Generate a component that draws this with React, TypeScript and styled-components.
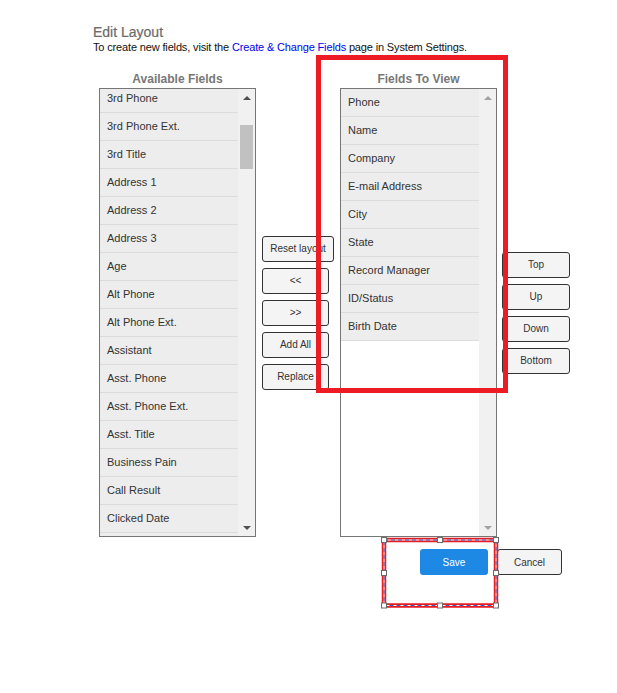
import React from "react";
import styled, { createGlobalStyle } from "styled-components";

const available = [
  "3rd Phone",
  "3rd Phone Ext.",
  "3rd Title",
  "Address 1",
  "Address 2",
  "Address 3",
  "Age",
  "Alt Phone",
  "Alt Phone Ext.",
  "Assistant",
  "Asst. Phone",
  "Asst. Phone Ext.",
  "Asst. Title",
  "Business Pain",
  "Call Result",
  "Clicked Date",
];

const toView = [
  "Phone",
  "Name",
  "Company",
  "E-mail Address",
  "City",
  "State",
  "Record Manager",
  "ID/Status",
  "Birth Date",
];

const moveButtons = ["<<", ">>", "Add All", "Replace"];
const orderButtons = ["Top", "Up", "Down", "Bottom"];

const handles = [
  [6, 8],
  [62, 8],
  [118, 8],
  [6, 41],
  [118, 41],
  [6, 73.5],
  [62, 73.5],
  [118, 73.5],
];

const App = () => {
  return (
    <Page>
      <GlobalStyle />
      <Title>Edit Layout</Title>
      <Hint>
        To create new fields, visit the <Link href="#">Create &amp; Change Fields</Link> page in System
        Settings.
      </Hint>

      <Board>
        <ColumnHead $col={1}>Available Fields</ColumnHead>
        <ColumnHead $col={3}>Fields To View</ColumnHead>

        <ListBox $col={1}>
          <Items $offset={-4}>
            {available.map((name) => (
              <Item key={name}>{name}</Item>
            ))}
            {/* next row peeking in under the fold */}
            <Item />
          </Items>
          <ScrollTrack>
            <ArrowBox>
              <ArrowUp $dim={false} />
            </ArrowBox>
            <Thumb />
            <Spacer />
            <ArrowBox>
              <ArrowDown $dim={false} />
            </ArrowBox>
          </ScrollTrack>
        </ListBox>

        <ButtonColumn $col={2} $pad={6}>
          <ActionButton $wide>Reset layout</ActionButton>
          {moveButtons.map((label) => (
            <ActionButton key={label}>{label}</ActionButton>
          ))}
        </ButtonColumn>

        <ListBox $col={3}>
          <Items $offset={0}>
            {toView.map((name) => (
              <Item key={name}>{name}</Item>
            ))}
          </Items>
          <ScrollTrack>
            <ArrowBox>
              <ArrowUp $dim />
            </ArrowBox>
            <Spacer />
            <ArrowBox>
              <ArrowDown $dim />
            </ArrowBox>
          </ScrollTrack>
        </ListBox>

        <ButtonColumn $col={4} $pad={5}>
          {orderButtons.map((label) => (
            <OrderButton key={label}>{label}</OrderButton>
          ))}
        </ButtonColumn>
      </Board>

      <Footer>
        <SaveButton>Save</SaveButton>
        <CancelButton>Cancel</CancelButton>
      </Footer>

      {/* review markup drawn over the screen */}
      <Highlight />
      <Selection width="126" height="82" viewBox="0 0 126 82">
        <rect x="6" y="8" width="112" height="65.5" fill="none" stroke="#e81c24" strokeWidth="4.5" />
        <rect x="6" y="8" width="112" height="65.5" fill="none" stroke="#ffffff" strokeWidth="1" />
        <rect
          x="6"
          y="8"
          width="112"
          height="65.5"
          fill="none"
          stroke="#2f62c4"
          strokeWidth="1"
          strokeDasharray="4 3"
        />
        {handles.map(([x, y]) => (
          <rect
            key={`${x}-${y}`}
            x={x - 2.5}
            y={y - 2.5}
            width="5"
            height="5"
            fill="#ffffff"
            stroke="#6a6a6a"
            strokeWidth="1"
          />
        ))}
      </Selection>
    </Page>
  );
};

export default App;

const GlobalStyle = createGlobalStyle`
  html, body {
    margin: 0;
    padding: 0;
    background: #ffffff;
  }
  body {
    font-family: "Liberation Sans", Arial, sans-serif;
  }
`;

const Page = styled.div`
  position: relative;
  width: 617px;
  min-height: 693px;
  box-sizing: border-box;
  padding: 24px 0 0 93px;
`;

const Title = styled.div`
  font-size: 14px;
  line-height: 16px;
  color: #6b6b6b;
  -webkit-text-stroke: 0.2px #6b6b6b;
`;

const Hint = styled.div`
  font-size: 11px;
  line-height: 14px;
  letter-spacing: -0.15px;
  color: #111111;
`;

const Link = styled.a`
  color: #0000ee;
  text-decoration: none;
`;

const Board = styled.div`
  display: grid;
  grid-template-columns: 157px 84px 157px 73px;
  grid-template-rows: 14px 449px;
  row-gap: 2px;
  margin: 18px 0 0 6px;
`;

const ColumnHead = styled.div<{ $col: number }>`
  grid-row: 1;
  grid-column: ${(p) => p.$col};
  text-align: center;
  font-size: 12px;
  line-height: 14px;
  font-weight: bold;
  color: #777777;
`;

const ListBox = styled.div<{ $col: number }>`
  grid-row: 2;
  grid-column: ${(p) => p.$col};
  display: flex;
  box-sizing: border-box;
  border: 1px solid #767676;
  background: #ffffff;
  overflow: hidden;
`;

const Items = styled.div<{ $offset: number }>`
  flex: 1;
  margin-top: ${(p) => p.$offset}px;
`;

const Item = styled.div`
  height: 27px;
  line-height: 27px;
  padding-left: 7px;
  border-bottom: 1px solid #dcdcdc;
  background: #ededed;
  font-size: 11px;
  color: #333333;
  white-space: nowrap;
`;

const ScrollTrack = styled.div`
  width: 17px;
  flex: none;
  display: flex;
  flex-direction: column;
  background: #f1f1f1;
`;

const ArrowBox = styled.div`
  height: 17px;
  display: flex;
  align-items: center;
  justify-content: center;
`;

const ArrowUp = styled.div<{ $dim: boolean }>`
  width: 0;
  height: 0;
  border-left: 4px solid transparent;
  border-right: 4px solid transparent;
  border-bottom: 4px solid ${(p) => (p.$dim ? "#a3a3a3" : "#505050")};
`;

const ArrowDown = styled.div<{ $dim: boolean }>`
  width: 0;
  height: 0;
  border-left: 4px solid transparent;
  border-right: 4px solid transparent;
  border-top: 4px solid ${(p) => (p.$dim ? "#a3a3a3" : "#505050")};
`;

const Thumb = styled.div`
  height: 44px;
  margin: 19px 2px 0 2px;
  background: #c1c1c1;
`;

const Spacer = styled.div`
  flex: 1;
`;

const ButtonColumn = styled.div<{ $col: number; $pad: number }>`
  grid-row: 2;
  grid-column: ${(p) => p.$col};
  align-self: center;
  display: flex;
  flex-direction: column;
  align-items: flex-start;
  gap: 6px;
  padding-left: ${(p) => p.$pad}px;
`;

const ActionButton = styled.button<{ $wide?: boolean }>`
  width: ${(p) => (p.$wide ? 72 : 67)}px;
  height: 26px;
  padding: 0;
  border: 1px solid #333333;
  border-radius: 3px;
  background: #f4f4f4;
  font-family: "Liberation Sans", Arial, sans-serif;
  font-size: 10px;
  color: #333333;
`;

const OrderButton = styled(ActionButton)`
  width: 68px;
`;

const Footer = styled.div`
  display: flex;
  gap: 9px;
  margin: 12px 0 0 327px;
`;

const SaveButton = styled.button`
  width: 68px;
  height: 26px;
  padding: 0;
  border: none;
  border-radius: 3px;
  background: #1e88e5;
  font-family: "Liberation Sans", Arial, sans-serif;
  font-size: 10px;
  color: #ffffff;
`;

const CancelButton = styled(ActionButton)`
  width: 65px;
`;

const Highlight = styled.div`
  position: absolute;
  left: 316px;
  top: 55px;
  width: 192px;
  height: 338px;
  box-sizing: border-box;
  border: 5px solid #ed1c24;
  pointer-events: none;
`;

const Selection = styled.svg`
  position: absolute;
  left: 378px;
  top: 532px;
  pointer-events: none;
`;
